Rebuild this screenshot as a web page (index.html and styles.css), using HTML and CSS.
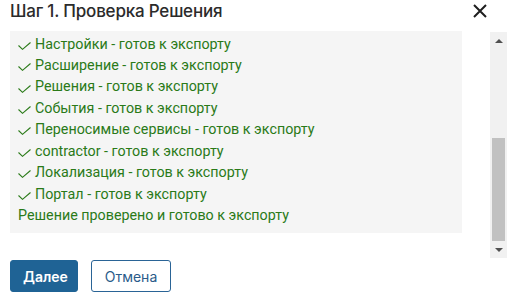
FILE: index.html
```html
<!DOCTYPE html>
<html lang="ru">
<head>
    <meta charset="UTF-8">
    <title>Шаг 1. Проверка Решения</title>
    <link rel="stylesheet" href="styles.css">
</head>
<body>
    <div class="dialog">
        <div class="dialog-header">
            <h2 class="dialog-title">Шаг 1. Проверка Решения</h2>
            <button class="dialog-close" aria-label="Закрыть">
                <svg width="14" height="14" viewBox="0 0 14 14"><path d="M1 1 L13 13 M13 1 L1 13" stroke="#1e1e1e" stroke-width="2" fill="none"/></svg>
            </button>
        </div>

        <div class="dialog-main">
            <div class="dialog-body" id="dialog-body">
                <div class="check-log" id="check-log"></div>
            </div>
            <div class="scrollbar">
                <div class="scroll-btn"><span class="arrow-up"></span></div>
                <div class="scroll-track" id="scroll-track"><div class="scroll-thumb" id="scroll-thumb"></div></div>
                <div class="scroll-btn"><span class="arrow-down"></span></div>
            </div>
        </div>

        <div class="dialog-footer">
            <button class="btn btn-primary">Далее</button>
            <button class="btn btn-outline">Отмена</button>
        </div>
    </div>

    <script>
        var parts = ['Объекты', 'Процессы', 'Страницы', 'Виджеты', 'Справочники', 'Роли', 'Модули', 'Отчёты', 'Шаблоны',
                     'Настройки', 'Расширение', 'Решения', 'События', 'Переносимые сервисы', 'contractor', 'Локализация', 'Портал'];
        var check = '<svg class="check" width="13" height="8" viewBox="0 0 13 8"><path d="M0.5 3.5 L4.5 7.3 L12.5 0.5" stroke="#2a7a18" stroke-width="1.1" fill="none"/></svg>';
        var log = document.getElementById('check-log');
        var html = '';
        for (var i = 0; i < parts.length; i++) {
            html += '<div class="check-row">' + check + '<span>' + parts[i] + ' - готов к экспорту</span></div>';
        }
        html += '<div class="check-row">Решение проверено и готово к экспорту</div>';
        log.innerHTML = html;

        // список прокручен до конца, как после проверки
        var body = document.getElementById('dialog-body');
        body.scrollTop = body.scrollHeight;

        // ползунок
        var track = document.getElementById('scroll-track');
        var thumb = document.getElementById('scroll-thumb');
        var t = track.clientHeight;
        thumb.style.height = Math.round(t * body.clientHeight / body.scrollHeight) + 'px';
        thumb.style.top = Math.round(t * body.scrollTop / body.scrollHeight) + 'px';
    </script>
</body>
</html>
```

FILE: styles.css
```css
body { margin: 0; background: #fff; font-family: Inter, "Noto Sans", sans-serif; color: #333; }
.dialog { width: 497px; padding: 0 2px 0 10px; }
.dialog-header { display: flex; justify-content: space-between; align-items: flex-start; height: 31px; }
.dialog-title { margin: 0; font-size: 17px; font-weight: 500; line-height: 22px; color: #2b2b2b; letter-spacing: -0.2px; }
.dialog-close { background: none; border: none; padding: 0; margin: 4px 20px 0 0; width: 14px; height: 14px; cursor: pointer; display: flex; }
.dialog-main { display: flex; height: 227px; }
.dialog-body { flex: 1; overflow-y: scroll; scrollbar-width: none; box-sizing: border-box; padding-bottom: 25px; }
.scrollbar { width: 17px; background: #f1f1f1; display: flex; flex-direction: column; margin-top: 1px; }
.scroll-btn { height: 17px; display: flex; align-items: center; justify-content: center; }
.arrow-up { width: 0; height: 0; border-left: 4px solid transparent; border-right: 4px solid transparent; border-bottom: 4px solid #505050; }
.arrow-down { width: 0; height: 0; border-left: 4px solid transparent; border-right: 4px solid transparent; border-top: 4px solid #505050; }
.scroll-track { flex: 1; position: relative; }
.scroll-thumb { position: absolute; left: 2px; right: 2px; background: #c1c1c1; }
.check-log { background: #f5f5f5; margin-right: 28px; padding: 8px 8px 7px 8px; font-family: Roboto, sans-serif; font-size: 14.3px; line-height: 21.4px; color: #2a7a18; }
.check-row { display: flex; align-items: center; gap: 4px; white-space: nowrap; }
.check { flex: none; margin-top: 3px; }
.dialog-footer { display: flex; gap: 13px; padding-top: 2px; }
.btn { height: 32px; padding: 0 12px; border-radius: 3px; font-family: inherit; font-size: 14px; cursor: pointer; }
.btn-primary { background: #1f6395; border: 1px solid #1f6395; color: #fff; font-weight: 600; width: 68px; }
.btn-outline { background: #fff; border: 1px solid #2a6496; color: #2a5b8a; width: 80px; }
```
